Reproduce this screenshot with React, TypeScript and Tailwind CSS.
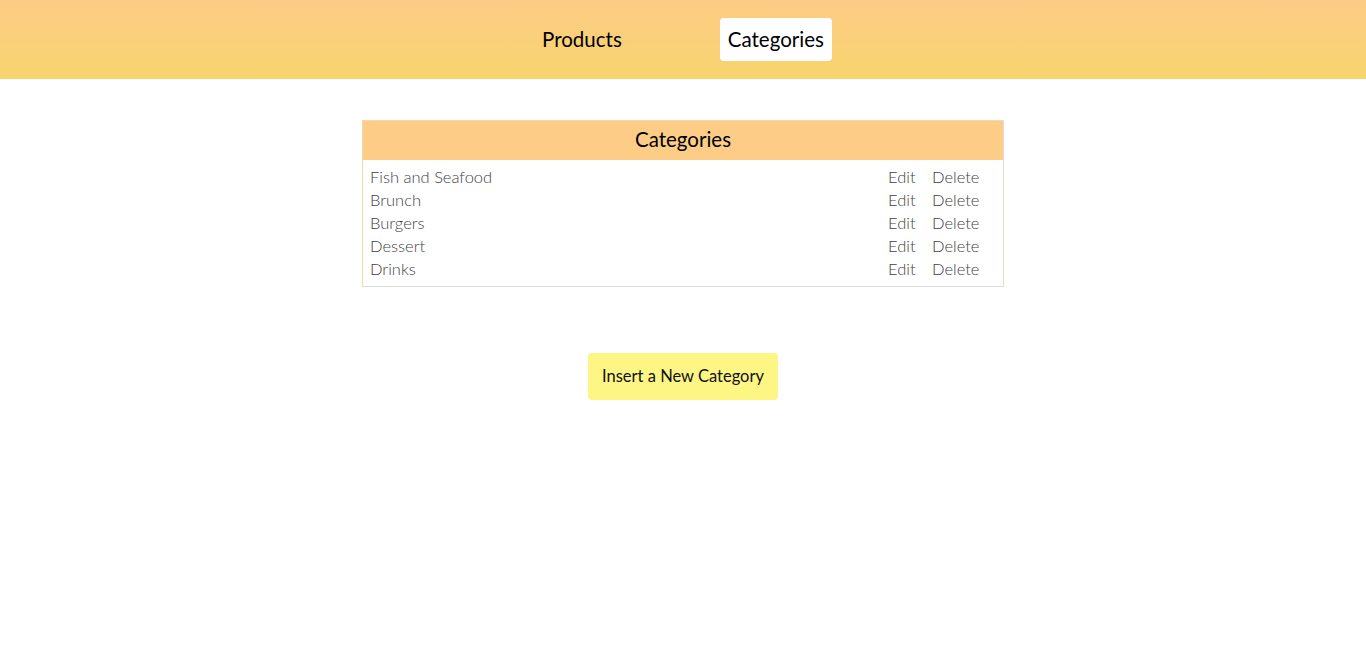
import { useState } from "react"

const categories = ["Fish and Seafood", "Brunch", "Burgers", "Dessert", "Drinks"]

export default function App() {
  const [active] = useState("Categories")
  return (
    <div className="min-h-screen bg-white font-['Lato','Open_Sans',sans-serif] text-black">
      <nav className="h-[79px] bg-gradient-to-b from-[#fccb85] to-[#f7d56d] flex justify-center items-center gap-[90px]">
        <a className={`text-[20.5px] px-2 py-[6px] rounded ${active === "Products" ? "bg-white" : ""}`}>Products</a>
        <a className={`text-[20.5px] px-2 py-[6px] rounded ${active === "Categories" ? "bg-white" : ""}`}>Categories</a>
      </nav>

      <div className="flex justify-center pt-[41px]">
        <div className="w-[642px] border border-[#f3d9b1] border-b-[#dcdcdc] border-r-[#e4dccf]">
          <div className="h-[39px] bg-[#fdcd87] flex items-center justify-center text-[20.5px] pb-[2px]">Categories</div>
          <div className="px-[7px] pt-[6px] pb-[5px]">
            {categories.map((c) => (
              <div key={c} className="flex h-[23px] items-center text-[16.5px] font-light text-[#3f3f3f]">
                <span className="flex-1">{c}</span>
                <span className="w-[44px]">Edit</span>
                <span className="w-[64px]">Delete</span>
              </div>
            ))}
          </div>
        </div>
      </div>

      <div className="flex justify-center pt-[66px]">
        <button className="w-[190px] h-[47px] bg-[#fdf685] rounded text-[16.5px] text-[#111]">Insert a New Category</button>
      </div>
    </div>
  )
}
